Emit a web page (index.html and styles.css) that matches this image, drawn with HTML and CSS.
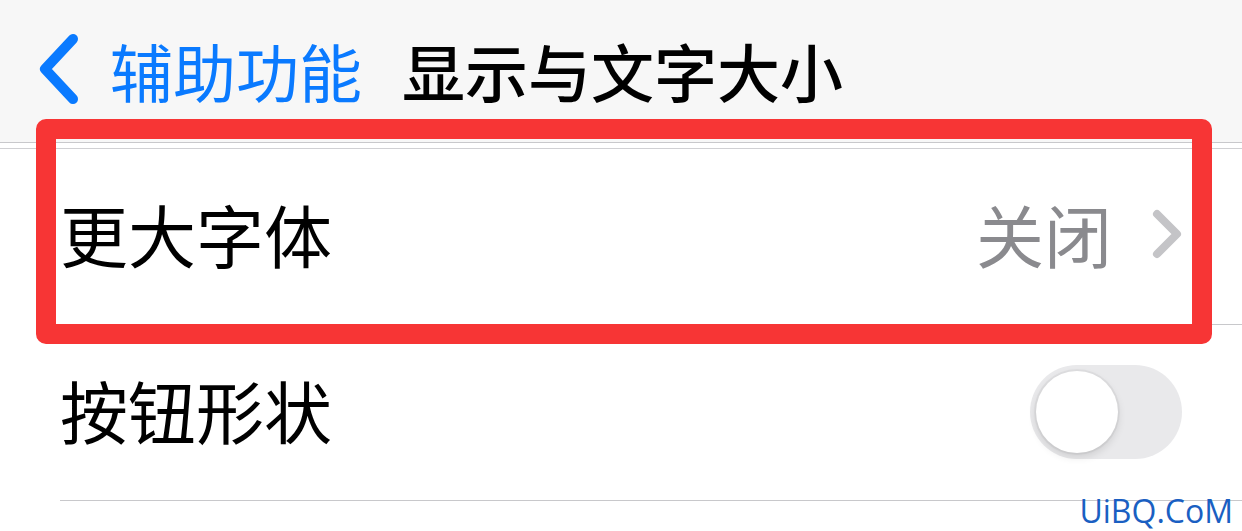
FILE: index.html
```html
<!DOCTYPE html>
<html lang="zh-CN">
<head>
  <meta charset="UTF-8" />
  <meta name="viewport" content="width=device-width, initial-scale=1" />
  <title>显示与文字大小</title>
  <link rel="stylesheet" href="styles.css">
</head>
<body>
  <!-- Navigation bar -->
  <header class="nav-bar">
    <a class="back-link" href="#">
      <svg class="back-icon" width="42" height="70" viewBox="0 0 42 70">
        <path d="M35 5 L7 35 L35 65" fill="none" stroke="#0a7aff" stroke-width="10" stroke-linecap="round" stroke-linejoin="round" />
      </svg>
      <span>辅助功能</span>
    </a>
    <h1 class="nav-title">显示与文字大小</h1>
  </header>

  <div class="settings-group">
    <div class="setting-row">
      <span class="row-label">更大字体</span>
      <span class="row-value">关闭</span>
      <svg class="chevron" width="30" height="50" viewBox="0 0 30 50">
        <path d="M5 5 L25 25 L5 45" fill="none" stroke="#c4c4c7" stroke-width="8" stroke-linecap="round" stroke-linejoin="round" />
      </svg>
    </div>
    <div class="setting-row">
      <span class="row-label">按钮形状</span>
      <div class="switch">
        <div class="switch-knob"></div>
      </div>
    </div>
  </div>

  <!-- highlight frame -->
  <div class="highlight"></div>

  <div class="watermark">UiBQ.CoM</div>
</body>
</html>
```

FILE: styles.css
```css
body {
  margin: 0;
  padding: 0;
  background-color: #fff;
  color: #000;
  font-family: "Noto Sans CJK SC", "Noto Sans", sans-serif;
  position: relative;
  height: 531px;
  overflow: hidden;
}
.nav-bar {
  display: flex;
  align-items: center;
  height: 143px;
  box-sizing: border-box;
  padding: 0 0 4px 38px;
  background-color: #f7f7f7;
  border-bottom: 1px solid #c8c8cb;
}
.back-link {
  display: flex;
  align-items: center;
  gap: 30px;
  color: #0a7aff;
  text-decoration: none;
  font-size: 63px;
  line-height: 1;
}
.back-icon {
  display: block;
}
.nav-title {
  margin: 0 0 0 40px;
  font-size: 63px;
  font-weight: 500;
  line-height: 1;
}
.settings-group {
  margin-top: 5px;
  border-top: 1px solid #d0d0d3;
}
.setting-row {
  display: flex;
  align-items: center;
  height: 176px;
  margin-left: 60px;
  padding: 0 60px 6px 0;
  box-sizing: border-box;
  border-bottom: 1px solid #c8c8cb;
  font-size: 68px;
  line-height: 1;
}
.row-label {
  flex: 1;
}
.row-value {
  color: #8a8a8e;
  margin-right: 40px;
}
.chevron {
  display: block;
}
.switch {
  display: flex;
  align-items: center;
  width: 152px;
  height: 94px;
  margin-top: 4px;
  padding: 0 6px;
  box-sizing: border-box;
  border-radius: 47px;
  background-color: #e9e9eb;
}
.switch-knob {
  width: 82px;
  height: 82px;
  border-radius: 50%;
  background-color: #fff;
  box-shadow: 0 4px 8px rgba(0, 0, 0, 0.12), 0 0 0 2px rgba(0, 0, 0, 0.04);
}
.highlight {
  position: absolute;
  left: 36px;
  top: 119px;
  width: 1176px;
  height: 225px;
  box-sizing: border-box;
  border: 20px solid #f73535;
  border-radius: 10px;
}
.watermark {
  position: absolute;
  right: 9px;
  bottom: 3px;
  font-family: "Open Sans", sans-serif;
  font-size: 32px;
  line-height: 1.1;
  color: #1a5fc2;
}
```
